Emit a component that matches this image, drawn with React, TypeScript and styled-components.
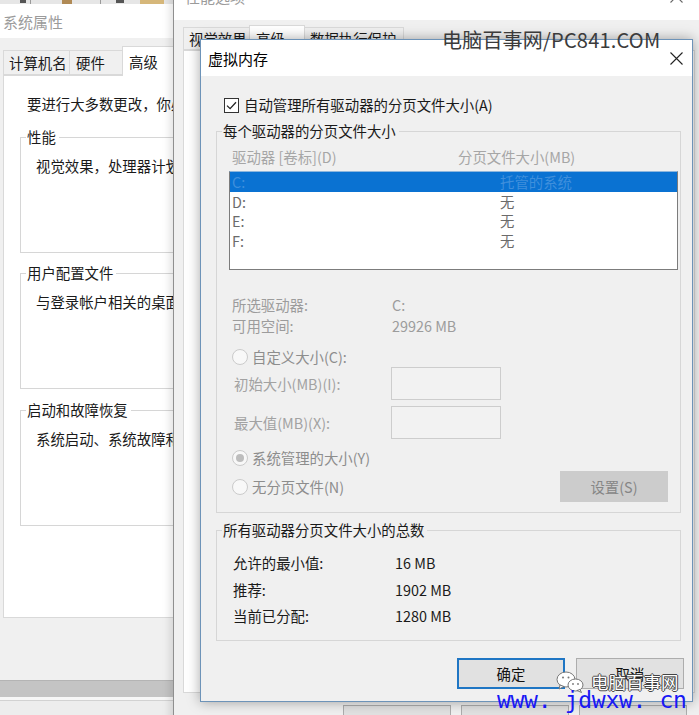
import React from "react";
import styled, { createGlobalStyle } from "styled-components";

const FONT = `"Noto Sans CJK SC", "Noto Sans", sans-serif`;

const GlobalStyle = createGlobalStyle`
  html, body { margin: 0; padding: 0; background: #e4e4e4; }
  #root { width: 699px; height: 715px; }
  * { box-sizing: border-box; }
`;

const Desktop = styled.div`
  position: relative;
  width: 699px;
  height: 715px;
  overflow: hidden;
  background: #e4e4e4;
  font-family: ${FONT};
  font-size: 14.4px;
  color: #1a1a1a;
`;

const DesktopIcons = styled.svg`
  position: absolute;
  left: 0;
  top: 0;
`;

/* ---------- shared: tabs and group boxes ---------- */
const TabStrip = styled.div<{ $h: number; $pl: number; $mt?: number }>`
  flex: none;
  display: flex;
  align-items: flex-end;
  height: ${(p) => p.$h}px;
  margin-top: ${(p) => p.$mt ?? 0}px;
  padding-left: ${(p) => p.$pl}px;
  position: relative;
  z-index: 1;
`;

const Tab = styled.div<{ $w: number; $h: number; $pl: number; $active?: boolean }>`
  flex: none;
  width: ${(p) => p.$w}px;
  height: ${(p) => p.$h}px;
  padding-left: ${(p) => p.$pl}px;
  margin-bottom: ${(p) => (p.$active ? -1 : 0)}px;
  background: ${(p) => (p.$active ? "#ffffff" : "#f0f0f0")};
  border: 1px solid #d9d9d9;
  border-bottom: ${(p) => (p.$active ? "none" : "1px solid #d9d9d9")};
  display: flex;
  align-items: center;
  line-height: 18px;
  white-space: nowrap;
  overflow: hidden;
  & + & {
    margin-left: -1px;
  }
`;

const GroupBox = styled.fieldset<{ $mt?: number; $ml?: number; $w?: number }>`
  margin: ${(p) => p.$mt ?? 0}px 0 0 ${(p) => p.$ml ?? 0}px;
  padding: 0;
  min-width: 0;
  width: ${(p) => (p.$w ? `${p.$w}px` : "auto")};
  border: 1px solid #d6d6d6;
`;

const GroupLegend = styled.legend`
  margin-left: 5px;
  padding: 0 3px 0 1px;
  line-height: 20px;
  font-size: 14.4px;
  color: #1a1a1a;
  white-space: nowrap;
`;

/* ---------- system properties (back window) ---------- */
const SysWindow = styled.div`
  position: absolute;
  z-index: 1;
  left: 0;
  top: 4px;
  width: 176px;
  height: 711px;
  background: #f0f0f0;
  display: flex;
  flex-direction: column;
  overflow: hidden;
`;

const SysTitle = styled.div`
  flex: none;
  height: 34px;
  background: #ffffff;
  padding: 9px 0 0 3px;
  font-size: 15px;
  line-height: 18px;
  color: #9b9b9b;
  white-space: nowrap;
`;

const SysPanel = styled.div`
  flex: none;
  margin-left: 3px;
  height: 543px;
  background: #ffffff;
  border: 1px solid #d9d9d9;
  padding-top: 18px;
  overflow: hidden;
  white-space: nowrap;
`;

const SysIntro = styled.div`
  padding-left: 23px;
  line-height: 20px;
`;

const SysGroupBody = styled.div`
  height: 105px;
  padding: 9px 0 0 15px;
  line-height: 20px;
`;

const SysFooter = styled.div`
  flex: 1;
  display: flex;
  flex-direction: column;
  padding-top: 62px;
`;

const SysBand = styled.div`
  flex: none;
  height: 17px;
  background: #c4c4c4;
  border-top: 1px solid #b4b4b4;
`;

const SysBottom = styled.div`
  flex: 1;
  background: #ededed;
  border-top: 3px solid #f7f7f7;
  box-shadow: inset 0 1px 0 #d2d2d2;
`;

/* ---------- performance options (middle window) ---------- */
const PerfWindow = styled.div`
  position: absolute;
  z-index: 2;
  left: 173px;
  top: -22px;
  width: 530px;
  height: 760px;
  background: #f0f0f0;
  border-left: 1px solid #8f8f8f;
  box-shadow: -3px 0 8px rgba(0, 0, 0, 0.12);
  display: flex;
  flex-direction: column;
`;

const PerfTitle = styled.div`
  flex: none;
  height: 42px;
  background: #ffffff;
  display: flex;
  align-items: center;
  justify-content: space-between;
  padding: 0 20px 6px 11px;
  font-size: 15px;
  color: #9b9b9b;
`;

const PerfPanel = styled.div`
  flex: none;
  margin-left: 9px;
  width: 512px;
  height: 643px;
  background: #ffffff;
  border: 1px solid #d9d9d9;
`;

const PerfButtons = styled.div`
  flex: none;
  display: flex;
  gap: 10px;
  margin-top: 12px;
  padding-left: 169px;
`;

const PerfButton = styled.div`
  width: 108px;
  height: 23px;
  background: #e1e1e1;
  border: 1px solid #adadad;
`;

/* ---------- virtual memory dialog (front) ---------- */
const Dialog = styled.div`
  position: absolute;
  z-index: 3;
  left: 200px;
  top: 39px;
  width: 493px;
  background: #f0f0f0;
  border: 1px solid #6d93b8;
  box-shadow: 0 0 12px rgba(0, 0, 0, 0.35);
  display: flex;
  flex-direction: column;
`;

const DialogTitle = styled.div`
  height: 36px;
  background: #ffffff;
  display: flex;
  align-items: center;
  justify-content: space-between;
  padding: 0 9px 0 7px;
  font-size: 15px;
  color: #000;
`;

const DialogBody = styled.div`
  padding: 19px 11px 12px 15px;
  display: flex;
  flex-direction: column;
  white-space: nowrap;
`;

const CheckRow = styled.label`
  height: 20px;
  margin-left: 8px;
  display: flex;
  align-items: center;
  gap: 5px;
  line-height: 20px;
  color: #1a1a1a;
`;

const GroupInner = styled.div<{ $pt: number; $pb: number }>`
  padding: ${(p) => p.$pt}px 2px ${(p) => p.$pb}px 12px;
  display: flex;
  flex-direction: column;
`;

const ColumnHeader = styled.div`
  height: 20px;
  line-height: 20px;
  display: grid;
  grid-template-columns: 226px 1fr;
  padding-left: 3px;
  color: #a6a6a6;
`;

const DriveList = styled.div`
  margin-top: 4px;
  height: 99px;
  background: #ffffff;
  border: 1px solid #7c7c7c;
  border-top-color: #8db6dd;
`;

const DriveRow = styled.div<{ $selected?: boolean }>`
  height: 19.5px;
  line-height: 19.5px;
  display: grid;
  grid-template-columns: 268px 1fr;
  padding-left: 2px;
  background: ${(p) => (p.$selected ? "#0a72d2" : "transparent")};
  color: ${(p) => (p.$selected ? "#3f8fdc" : "#6b6b6b")};
`;

const InfoRow = styled.div<{ $mt?: number; $col: number; $h: number; $color: string; $pl: number }>`
  margin-top: ${(p) => p.$mt ?? 0}px;
  height: ${(p) => p.$h}px;
  line-height: ${(p) => p.$h}px;
  display: grid;
  grid-template-columns: ${(p) => p.$col}px 1fr;
  padding-left: ${(p) => p.$pl}px;
  color: ${(p) => p.$color};
`;

const RadioRow = styled.div<{ $mt: number; $h?: number }>`
  margin-top: ${(p) => p.$mt}px;
  height: ${(p) => p.$h ?? 21}px;
  display: flex;
  align-items: center;
  padding-left: 3px;
  color: #8d8d8d;
`;

const RadioItem = styled.span`
  display: flex;
  align-items: center;
  gap: 4px;
  line-height: 20px;
`;

const RadioCircle = styled.span<{ $checked?: boolean }>`
  width: 16px;
  height: 16px;
  border-radius: 50%;
  border: 1px solid #cbcbcb;
  background: #f8f8f8;
  display: flex;
  align-items: center;
  justify-content: center;
  &::after {
    content: "";
    width: 8px;
    height: 8px;
    border-radius: 50%;
    background: ${(p) => (p.$checked ? "#bdbdbd" : "transparent")};
  }
`;

const FieldRow = styled.div<{ $mt: number }>`
  margin-top: ${(p) => p.$mt}px;
  height: 33px;
  display: grid;
  grid-template-columns: 157px 110px;
  align-items: center;
  padding-left: 5px;
  color: #a2a2a2;
`;

const FieldBox = styled.div`
  height: 33px;
  background: #f2f2f2;
  border: 1px solid #cdcdcd;
`;

const SetButton = styled.div`
  margin-left: auto;
  margin-right: 10px;
  width: 108px;
  height: 31px;
  background: #cccccc;
  border: 1px solid #cccccc;
  color: #868686;
  display: flex;
  align-items: center;
  justify-content: center;
`;

const ButtonRow = styled.div`
  margin-top: 17px;
  margin-right: -3px;
  display: flex;
  justify-content: flex-end;
  gap: 11px;
`;

const DlgButton = styled.div<{ $default?: boolean }>`
  width: 108px;
  height: 31px;
  background: #e1e1e1;
  border: 1px solid ${(p) => (p.$default ? "#1f76c4" : "#adadad")};
  box-shadow: ${(p) => (p.$default ? "inset 0 0 0 1px #1f76c4" : "none")};
  display: flex;
  align-items: center;
  justify-content: center;
  color: #111;
`;

/* ---------- watermarks ---------- */
const TopMark = styled.div`
  position: absolute;
  left: 442px;
  top: 28px;
  font-size: 20px;
  line-height: 24px;
  letter-spacing: 0.2px;
  color: #3b3b3b;
  white-space: nowrap;
  z-index: 10;
`;

const WeChatMark = styled.svg`
  position: absolute;
  left: 556px;
  top: 671px;
  z-index: 10;
`;

const BottomMark = styled.div`
  position: absolute;
  left: 591px;
  top: 671px;
  font-size: 17.5px;
  line-height: 22px;
  color: #ffffff;
  white-space: nowrap;
  text-shadow: 1px 0 0 #444, -1px 0 0 #444, 0 1px 0 #444, 0 -1px 0 #444;
  z-index: 10;
`;

const UrlMark = styled.div`
  position: absolute;
  left: 497px;
  top: 686px;
  font-family: "DejaVu Sans Mono", "Liberation Mono", monospace;
  font-size: 23px;
  line-height: 28px;
  letter-spacing: -0.3px;
  color: #1818f5;
  white-space: pre;
  z-index: 10;
`;

const CloseIcon = ({ color = "#222" }: { color?: string }) => (
  <svg width="13" height="13" viewBox="0 0 13 13">
    <path d="M0.5 0.5 L12.5 12.5 M12.5 0.5 L0.5 12.5" stroke={color} strokeWidth="1.1" fill="none" />
  </svg>
);

const CheckIcon = () => (
  <svg width="15" height="15" viewBox="0 0 15 15">
    <rect x="0.5" y="0.5" width="14" height="14" fill="#fff" stroke="#333" />
    <path d="M3 7.6 L6.1 10.6 L12 4.2" stroke="#222" strokeWidth="1.3" fill="none" />
  </svg>
);

const sysGroups = [
  { title: "性能", text: "视觉效果，处理器计划，内存使用，以及虚拟内存", mt: 13 },
  { title: "用户配置文件", text: "与登录帐户相关的桌面设置", mt: 10 },
  { title: "启动和故障恢复", text: "系统启动、系统故障和调试信息", mt: 11 },
];

const drives = [
  { d: "C:", size: "托管的系统", selected: true },
  { d: "D:", size: "无" },
  { d: "E:", size: "无" },
  { d: "F:", size: "无" },
];

export default function App() {
  return (
    <>
      <GlobalStyle />
      <Desktop>
        <DesktopIcons width="176" height="4" viewBox="0 0 176 4">
          <rect width="176" height="4" fill="#e6e6e6" />
          <rect x="30" y="0" width="1" height="4" fill="#9a9a9a" />
          <rect x="20" y="0" width="6" height="3" fill="#555" />
          <rect x="62" y="0" width="10" height="4" fill="#b08a55" />
          <rect x="100" y="0" width="1" height="4" fill="#9a9a9a" />
          <rect x="116" y="0" width="8" height="3" fill="#555" />
          <rect x="140" y="0" width="24" height="4" fill="#d6b77a" />
        </DesktopIcons>

        <SysWindow>
          <SysTitle>系统属性</SysTitle>
          <TabStrip $h={37} $pl={3}>
            <Tab $w={67} $h={25} $pl={5}>计算机名</Tab>
            <Tab $w={54} $h={25} $pl={6}>硬件</Tab>
            <Tab $w={60} $h={30} $pl={6} $active>高级</Tab>
          </TabStrip>
          <SysPanel>
            <SysIntro>要进行大多数更改，你必须作为管理员登录。</SysIntro>
            {sysGroups.map((g) => (
              <GroupBox key={g.title} $mt={g.mt} $ml={16} $w={400}>
                <GroupLegend>{g.title}</GroupLegend>
                <SysGroupBody>{g.text}</SysGroupBody>
              </GroupBox>
            ))}
          </SysPanel>
          <SysFooter>
            <SysBand />
            <SysBottom />
          </SysFooter>
        </SysWindow>

        <PerfWindow>
          <PerfTitle>
            <span>性能选项</span>
            <CloseIcon color="#666" />
          </PerfTitle>
          <TabStrip $h={25} $pl={9} $mt={5}>
            <Tab $w={67} $h={23} $pl={5}>视觉效果</Tab>
            <Tab $w={56} $h={26} $pl={6} $active>高级</Tab>
            <Tab $w={100} $h={23} $pl={5}>数据执行保护</Tab>
          </TabStrip>
          <PerfPanel />
          <PerfButtons>
            <PerfButton />
            <PerfButton />
            <PerfButton />
          </PerfButtons>
        </PerfWindow>

        <Dialog>
          <DialogTitle>
            <span>虚拟内存</span>
            <CloseIcon />
          </DialogTitle>
          <DialogBody>
            <CheckRow>
              <CheckIcon />
              <span>自动管理所有驱动器的分页文件大小(A)</span>
            </CheckRow>

            <GroupBox $mt={6}>
              <GroupLegend>每个驱动器的分页文件大小</GroupLegend>
              <GroupInner $pt={6} $pb={10}>
                <ColumnHeader>
                  <span>驱动器 [卷标](D)</span>
                  <span>分页文件大小(MB)</span>
                </ColumnHeader>
                <DriveList>
                  {drives.map((r) => (
                    <DriveRow key={r.d} $selected={r.selected}>
                      <span>{r.d}</span>
                      <span>{r.size}</span>
                    </DriveRow>
                  ))}
                </DriveList>
                <InfoRow $mt={24} $h={21} $col={160} $pl={3} $color="#9c9c9c">
                  <span>所选驱动器:</span>
                  <span>C:</span>
                </InfoRow>
                <InfoRow $h={21} $col={160} $pl={3} $color="#9c9c9c">
                  <span>可用空间:</span>
                  <span>29926 MB</span>
                </InfoRow>
                <RadioRow $mt={10}>
                  <RadioItem>
                    <RadioCircle />
                    自定义大小(C):
                  </RadioItem>
                </RadioRow>
                <FieldRow $mt={0}>
                  <span>初始大小(MB)(I):</span>
                  <FieldBox />
                </FieldRow>
                <FieldRow $mt={6}>
                  <span>最大值(MB)(X):</span>
                  <FieldBox />
                </FieldRow>
                <RadioRow $mt={8}>
                  <RadioItem>
                    <RadioCircle $checked />
                    系统管理的大小(Y)
                  </RadioItem>
                </RadioRow>
                <RadioRow $mt={3} $h={31}>
                  <RadioItem>
                    <RadioCircle />
                    无分页文件(N)
                  </RadioItem>
                  <SetButton>设置(S)</SetButton>
                </RadioRow>
              </GroupInner>
            </GroupBox>

            <GroupBox $mt={7}>
              <GroupLegend>所有驱动器分页文件大小的总数</GroupLegend>
              <GroupInner $pt={10} $pb={10}>
                <InfoRow $h={26.5} $col={162} $pl={4} $color="#1a1a1a">
                  <span>允许的最小值:</span>
                  <span>16 MB</span>
                </InfoRow>
                <InfoRow $h={26.5} $col={162} $pl={4} $color="#1a1a1a">
                  <span>推荐:</span>
                  <span>1902 MB</span>
                </InfoRow>
                <InfoRow $h={26.5} $col={162} $pl={4} $color="#1a1a1a">
                  <span>当前已分配:</span>
                  <span>1280 MB</span>
                </InfoRow>
              </GroupInner>
            </GroupBox>

            <ButtonRow>
              <DlgButton $default>确定</DlgButton>
              <DlgButton>取消</DlgButton>
            </ButtonRow>
          </DialogBody>
        </Dialog>

        <TopMark>电脑百事网/PC841.COM</TopMark>
        <WeChatMark width="28" height="22" viewBox="0 0 28 22">
          <ellipse cx="10" cy="8.5" rx="9" ry="7.5" fill="#fff" stroke="#777" strokeWidth="1" />
          <path d="M4 14 L3 18 L8 15.5 Z" fill="#fff" stroke="#777" strokeWidth="1" />
          <ellipse cx="19.5" cy="14" rx="7.5" ry="6" fill="#fff" stroke="#777" strokeWidth="1" />
          <path d="M24 18.5 L25.5 21.5 L21 19.5 Z" fill="#fff" stroke="#777" strokeWidth="1" />
          <circle cx="7" cy="6.5" r="1" fill="#777" />
          <circle cx="12.5" cy="6.5" r="1" fill="#777" />
          <circle cx="17" cy="13" r="0.9" fill="#777" />
          <circle cx="22" cy="13" r="0.9" fill="#777" />
        </WeChatMark>
        <BottomMark>电脑百事网</BottomMark>
        <UrlMark>www. jdwxw. cn</UrlMark>
      </Desktop>
    </>
  );
}
